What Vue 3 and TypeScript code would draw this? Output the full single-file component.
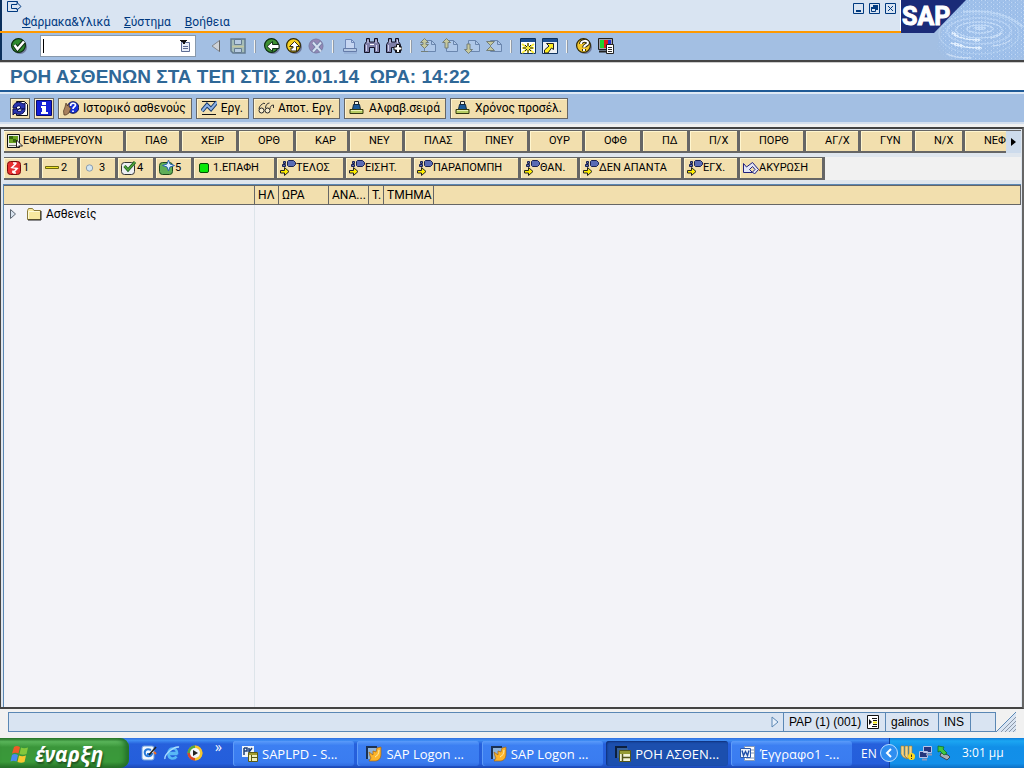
<script setup lang="ts">
interface Item { label: string; icon?: string; width: number }
interface Action { label: string; icon: string }
interface Task { label: string; icon: string; active?: boolean }

const menus = [
  { key: 'Φ', rest: 'άρμακα&Υλικά' },
  { key: 'Σ', rest: 'ύστημα' },
  { key: 'Β', rest: 'οήθεια' },
]
const windowButtons = [
  { label: 'Minimize', icon: 'win-min' },
  { label: 'Restore', icon: 'win-restore' },
  { label: 'Close', icon: 'win-close' },
]
const toolGroups: string[][] = [
  ['collapse', 'save'],
  ['back', 'exit', 'cancel'],
  ['print', 'find', 'find-next'],
  ['page-first', 'page-prev', 'page-next', 'page-last'],
  ['session', 'shortcut'],
  ['help', 'layout'],
]
const actions: Action[] = [
  { label: '', icon: 'refresh' },
  { label: '', icon: 'info' },
  { label: 'Ιστορικό ασθενούς', icon: 'history' },
  { label: 'Εργ.', icon: 'chart' },
  { label: 'Αποτ. Εργ.', icon: 'glasses' },
  { label: 'Αλφαβ.σειρά', icon: 'sort' },
  { label: 'Χρόνος προσέλ.', icon: 'sort' },
]
const clinics: Item[] = [
  { label: 'ΕΦΗΜΕΡΕΥΟΥΝ', icon: 'select', width: 122 },
  { label: 'ΠΑΘ', width: 56 },
  { label: 'ΧΕΙΡ', width: 57 },
  { label: 'ΟΡΘ', width: 57 },
  { label: 'ΚΑΡ', width: 54 },
  { label: 'ΝΕΥ', width: 55 },
  { label: 'ΠΛΑΣ', width: 61 },
  { label: 'ΠΝΕΥ', width: 64 },
  { label: 'ΟΥΡ', width: 55 },
  { label: 'ΟΦΘ', width: 58 },
  { label: 'ΠΔ', width: 47 },
  { label: 'Π/Χ', width: 50 },
  { label: 'ΠΟΡΘ', width: 66 },
  { label: 'ΑΓ/Χ', width: 55 },
  { label: 'ΓΥΝ', width: 54 },
  { label: 'Ν/Χ', width: 50 },
  { label: 'ΝΕΦ', width: 56 },
]
const statuses: Item[] = [
  { label: '1', icon: 'triage1', width: 38 },
  { label: '2', icon: 'triage2', width: 38 },
  { label: '3', icon: 'triage3', width: 38 },
  { label: '4', icon: 'triage4', width: 38 },
  { label: '5', icon: 'triage5', width: 38 },
  { label: '1.ΕΠΑΦΗ', icon: 'green', width: 83 },
  { label: 'ΤΕΛΟΣ', icon: 'move', width: 69 },
  { label: 'ΕΙΣΗΤ.', icon: 'move', width: 68 },
  { label: 'ΠΑΡΑΠΟΜΠΗ', icon: 'move', width: 107 },
  { label: 'ΘΑΝ.', icon: 'move', width: 59 },
  { label: 'ΔΕΝ ΑΠΑΝΤΑ', icon: 'move', width: 104 },
  { label: 'ΕΓΧ.', icon: 'move', width: 56 },
  { label: 'ΑΚΥΡΩΣΗ', icon: 'undo', width: 85 },
]
const columns: Item[] = [
  { label: '', width: 251 },
  { label: 'ΗΛ', width: 24 },
  { label: 'ΩΡΑ', width: 50 },
  { label: 'ΑΝΑ...', width: 40 },
  { label: 'Τ.', width: 15 },
  { label: 'ΤΜΗΜΑ', width: 50 },
]
const tasks: Task[] = [
  { label: 'SAPLPD - S...', icon: 'app-lpd' },
  { label: 'SAP Logon ...', icon: 'app-logon' },
  { label: 'SAP Logon ...', icon: 'app-logon' },
  { label: 'ΡΟΗ ΑΣΘΕΝ...', icon: 'app-flow', active: true },
  { label: 'Έγγραφο1 -...', icon: 'app-word' },
]
</script>

<template>
  <svg class="sprite" aria-hidden="true">
    <symbol id="menu-out" viewBox="0 0 16 14"><path d="M11.500 3V1.500H1.500V11.500H11.500V10M5.500 4.500H11V2.500L15 6.500L11 10V8.500H5.500z" fill="none" stroke="#00397f" /></symbol>
    <symbol id="win-min" viewBox="0 0 11 11"><path d="M.5.5h10v10H.5z" fill="none" stroke="#00397f" /><path d="M3 7h5v2H3z" fill="#00397f" /></symbol>
    <symbol id="win-restore" viewBox="0 0 11 11"><path d="M.5.5h10v10H.5z" fill="none" stroke="#00397f" /><path d="M4 2h5v5H4z" fill="#00397f" /><path d="M2.500 5.500h4v3h-4z" fill="#d9e4f2" stroke="#00397f" /><path d="M2 4h5v2H2z" fill="#00397f" /></symbol>
    <symbol id="win-close" viewBox="0 0 11 11"><path d="M.5.5h10v10H.5z" fill="none" stroke="#00397f" /><path d="M3 3l5 5M8 3l-5 5" stroke="#00397f" /></symbol>

    <symbol id="ok" viewBox="0 0 16 16"><circle cx="9" cy="9" r="7" fill="#6f7a9c" /><circle cx="7.500" cy="7.500" r="6.900" fill="#2f8a2f" stroke="#0b2b10" stroke-width="1.200" /><path d="M3.500 7l3 4L13 3.500" fill="none" stroke="#102a10" stroke-width="4.500" /><path d="M3.500 7l3 4L13 3.500" fill="none" stroke="#fff" stroke-width="2.500" /></symbol>
    <symbol id="list" viewBox="0 0 10 12"><path d="M1.500 2.500h8v9h-8z" fill="#e8eef8" stroke="#5c6c94" /><path d="M3 6.500h5M3 8.500h5" stroke="#5c6c94" /><path d="M0 0h7v1H6v1H5v2H3V2H1V1H0z" fill="#111" /></symbol>
    <symbol id="collapse" viewBox="0 0 16 16"><path d="M11.500 2.500v11L4 8z" fill="#cfd3d8" stroke="#84888f" /><path d="M11.500 2.500v11" stroke="#666" /></symbol>
    <symbol id="save" viewBox="0 0 16 16"><path d="M1 1h14v14H3l-2-2z" fill="#a5bdb8" stroke="#647c90" stroke-width="1.500" /><path d="M4.500 1.500h7v5h-7zM4.500 10.500h7v4h-7z" fill="#b7cbe2" stroke="#647c90" /><path d="M2 8.500h12" stroke="#c4c79e" stroke-width="1.500" /></symbol>
    <symbol id="back" viewBox="0 0 16 16"><circle cx="9" cy="9" r="7" fill="#6f7a9c" /><circle cx="7.500" cy="7.500" r="6.900" fill="#3f9133" stroke="#0b2b10" stroke-width="1.200" /><path d="M3 8.500l5.500-5v3H15v4H8.500v3z" fill="#fff" stroke="#13301a" /></symbol>
    <symbol id="exit" viewBox="0 0 16 16"><circle cx="9" cy="9" r="7" fill="#6f7a9c" /><circle cx="7.500" cy="7.500" r="6.900" fill="#f7d020" stroke="#2d2708" stroke-width="1.200" /><path d="M8.500 3.500l5 5h-3v4.500H5v-3h2V8.500H3.500z" fill="#fff" stroke="#352e10" /></symbol>
    <symbol id="cancel" viewBox="0 0 16 16"><circle cx="8" cy="8" r="7" fill="#9487b5" stroke="#7b7ca5" /><path d="M5 4.500l8 9M13 4.500l-8 9" stroke="#6b7fa4" stroke-width="3.400" /><path d="M5 4.500l8 9M13 4.500l-8 9" stroke="#d6e1f2" stroke-width="2" /></symbol>
    <symbol id="print" viewBox="0 0 16 16"><path d="M3.500 10V1.500h6l3 3V10" fill="#c6d6f2" stroke="#7088b8" /><path d="M9.500 1.500v3h3" fill="none" stroke="#7088b8" /><path d="M1.500 10.500h13v3h-13z" fill="#b4c8e4" stroke="#647ba8" /><path d="M2 15h13" stroke="#8ba3cc" /></symbol>
    <symbol id="find" viewBox="0 0 16 16"><path d="M.5 14.500v-8l2-3v-3h3v3.500h5V.5h3v3l2 3v8h-5v-5h-5v5z" fill="#7f7fa8" stroke="#111126" /><path d="M2.500 7v6M12.500 7v6M4 2v3M12 2v3" stroke="#d4d4f0" /><path d="M6 6.500h4" stroke="#fff" /></symbol>
    <symbol id="find-next" viewBox="0 0 16 16"><path d="M.5 14.500v-8l2-3v-3h3v3.500h4V.5h3v3l2 3v8h-5v-5h-4v5z" fill="#7f7fa8" stroke="#111126" /><path d="M2.500 7v6M4 2v3M11.500 2v3" stroke="#d4d4f0" /><path d="M10.500 6.500h3v2.500h2.500v3h-2.500v2.500h-3V12H8V9h2.500z" fill="#fff" stroke="#111" /></symbol>
    <symbol id="page" viewBox="0 0 16 16"><path d="M4.500 2.500h7l4 4v7h-11z" fill="#afc8e9" stroke="#6a86ae" /><path d="M11.500 2.500v4h4" fill="none" stroke="#6a86ae" /></symbol>
    <symbol id="page-first" viewBox="0 0 16 16"><use href="#page" /><path d="M4.500.5l4 4H6v2h2.500l-4 4-4-4H3v-2H.5zM1 13.500h7" fill="#c7c99c" stroke="#747f78" /></symbol>
    <symbol id="page-prev" viewBox="0 0 16 16"><use href="#page" /><path d="M4.500.5l4 4H6V10H3V4.500H.5z" fill="#c7c99c" stroke="#747f78" /></symbol>
    <symbol id="page-next" viewBox="0 0 16 16"><use href="#page" /><path d="M4.500 15.500l-4-4H3V6h3v5.500h2.500z" fill="#c7c99c" stroke="#747f78" /></symbol>
    <symbol id="page-last" viewBox="0 0 16 16"><use href="#page" /><path d="M4.500 7.500l-4-4h8zM4.500 8.500l4 4h-8z" fill="#c7c99c" stroke="#747f78" /></symbol>
    <symbol id="session" viewBox="0 0 16 16"><path d="M.5.5h15v15H.5z" fill="#fff" stroke="#10335f" /><path d="M1 1h14v3H1z" fill="#1d4f92" /><path d="M2 6l12 9M14 6L2 15M8 5v10M2 10h12" stroke="#f7e93c" stroke-width="2" /><path d="M8 5v3M8 12v3M3 10h3M10 10h3M5 7l2 2M11 7L9 9M5 13l2-2M11 13l-2-2" stroke="#222" /></symbol>
    <symbol id="shortcut" viewBox="0 0 16 16"><path d="M.5.5h15v15H.5z" fill="#eef1f4" stroke="#10335f" /><path d="M1 1h14v3H1z" fill="#1d4f92" /><path d="M4.500 5.500h7v6L9.500 10 6 15H2.500V12L7 8z" fill="#ffee22" stroke="#222" /></symbol>
    <symbol id="help" viewBox="0 0 16 16"><circle cx="9" cy="9" r="7" fill="#6f7a9c" /><circle cx="7.500" cy="7.500" r="6.900" fill="#f2c62a" stroke="#2d2708" stroke-width="1.200" /><path d="M5 6c0-4 7-4 7-1 0 2-4 2-4 4.500M8 11v2" fill="none" stroke="#2c250c" stroke-width="3.800" /><path d="M5 6c0-4 7-4 7-1 0 2-4 2-4 4.500M8 11v2" fill="none" stroke="#fff" stroke-width="2" /></symbol>
    <symbol id="layout" viewBox="0 0 16 16"><path d="M.5.5h14v11H.5z" fill="#a0a0ac" stroke="#222" /><path d="M2 2h4v8H2z" fill="#1fd22a" /><path d="M6 2h4v8H6z" fill="#e01818" /><path d="M10 2h3v8h-3z" fill="#2433c8" /><path d="M1 13.500h8" stroke="#222" stroke-width="2" /><path d="M8.500 6.500h7v9h-7z" fill="#fff" stroke="#222" /><path d="M10 9.500h4M10 11.500h4M10 13.500h4" stroke="#333" /></symbol>

    <symbol id="refresh" viewBox="0 0 16 16"><path d="M4.500 1.500h8l3 3v11h-11z" fill="#fff" stroke="#111" /><path d="M1 8C1 2 8 1 11 4l2-1v6H7l2-2C7 5 5 6 4 8z" fill="#2a35b0" stroke="#0a0d52" /><path d="M13 9c0 5-6 7-10 4l-2 2V9h6l-2 2c3 1 5 0 5-2z" fill="#2a35b0" stroke="#0a0d52" /></symbol>
    <symbol id="info" viewBox="0 0 16 16"><path d="M.5.5h15v15H.5z" fill="#1420d8" stroke="#060a70" /><path d="M6 2h4v3H6zM5 6h5v6h2v2H5v-2h1V8H5z" fill="#fff" /></symbol>
    <symbol id="history" viewBox="0 0 16 16"><circle cx="10" cy="7.500" r="5.800" fill="#1730d8" stroke="#07104c" /><path d="M7.500 6c0-3.500 5-3.500 5-1 0 2-2.500 1.500-2.500 4M10 10.500V12" fill="none" stroke="#fff" stroke-width="1.700" /><path d="M1 15l-.5-4L2 7l1-4 1.500 3L6 4v3l2 1-2 5-3 2z" fill="#a8805c" stroke="#4a3320" stroke-width=".7" /></symbol>
    <symbol id="chart" viewBox="0 0 16 16"><path d="M1 1.500h14M1 14.500h14" fill="none" stroke="#111" /><path d="M1 11l5-6 4 4 6-7" fill="none" stroke="#15396c" stroke-width="4" /><path d="M1 11l5-6 4 4 6-7" fill="none" stroke="#8fb2e6" stroke-width="2" /></symbol>
    <symbol id="glasses" viewBox="0 0 16 16"><path d="M1 9c0-3 3-5 5-6l1 1M7.500 8c0-3 2-5 4-5" fill="none" stroke="#333" /><circle cx="3.500" cy="10.500" r="2.500" fill="#f7edcf" stroke="#222" /><circle cx="9.500" cy="10.500" r="2.500" fill="#f7edcf" stroke="#222" /><path d="M12 9c0-2 1-4 3.500-4v3" fill="none" stroke="#333" /></symbol>
    <symbol id="sort" viewBox="0 0 16 16"><path d="M5.500 1.500h4v3h-4z" fill="#f2f2ea" stroke="#222" /><path d="M4.500 4.500h6l1 5h-8z" fill="#1d5b9a" stroke="#11283f" /><path d="M1 9.500h13v4H1z" fill="#b6cc62" stroke="#31380f" /><path d="M2 10.500h11" stroke="#eaf2b4" /></symbol>

    <symbol id="select" viewBox="0 0 16 16"><path d="M.5 1.500h12v13H.5z" fill="#e9ede4" stroke="#111" /><path d="M2 3h9v7H2z" fill="#6aa020" /><path d="M2 3h4v3H2zM6 6h3v3H6z" fill="#34660a" /><path d="M2 12.500h7" stroke="#777" /><path d="M9.500 7v8l2-2h4z" fill="#fff" stroke="#222" /></symbol>
    <symbol id="triage1" viewBox="0 0 16 16"><rect x=".5" y="1.500" width="13" height="13" rx="3" fill="#e83030" stroke="#7a0a0a" /><path d="M9.500 3L5 7.500l5 1L6 13M9.500 3H6M6 13v-2.500M6 13h3" fill="none" stroke="#fff" stroke-width="1.700" /></symbol>
    <symbol id="triage2" viewBox="0 0 16 16"><path d="M.5 6.500h13v2H.5z" fill="#f0e22a" stroke="#6b6710" /></symbol>
    <symbol id="triage3" viewBox="0 0 16 16"><circle cx="6.500" cy="8" r="3.200" fill="#d3e6f2" stroke="#8b9dae" /></symbol>
    <symbol id="triage4" viewBox="0 0 16 16"><rect x=".5" y="2.500" width="13" height="12" rx="3" fill="#eceef2" stroke="#333" /><path d="M3.500 6l3.500 4 7-8" fill="none" stroke="#1d5d1d" stroke-width="3" /><path d="M3.500 6l3.500 4 7-8" fill="none" stroke="#51a53c" stroke-width="1.400" /></symbol>
    <symbol id="triage5" viewBox="0 0 16 16"><rect x=".5" y="2.500" width="13" height="12" rx="3" fill="#5fae58" stroke="#1c4a1c" /><path d="M9.500 0l1.500 4 4.500 1.500L11 7l-1.500 4L8 7 3.500 5.500 8 4z" fill="#d9ecff" stroke="#2b64ac" /></symbol>
    <symbol id="green" viewBox="0 0 16 16"><rect x="2.500" y="3.500" width="9" height="9" rx="1.500" fill="#08e808" stroke="#044a04" /></symbol>
    <symbol id="move" viewBox="0 0 16 16"><path d="M8.500.5h5l2 2v2l-2 2h-5l-1-1v-4z" fill="#5a6cb4" stroke="#1a2250" /><path d="M3.500 1.500h2v2h-2zM2.500 4.500h3v2h-3z" fill="#5a6cb4" stroke="#1a2250" /><path d="M.5 10.500h4v-3l4.500 4-4.500 4v-2.500h-4z" fill="#ffee00" stroke="#222" /></symbol>
    <symbol id="undo" viewBox="0 0 16 16"><path d="M.5 3.500v9h9L6.500 9.500l3-3L12 9.500 9.500 12l2 2 4-4.500-6-7L3.500 7z" fill="#e3e6f6" stroke="#20207c" /></symbol>

    <symbol id="expander" viewBox="0 0 8 12"><path d="M1.500 1.500L6.500 6l-5 4.500z" fill="#d8e2ee" stroke="#5a6470" /></symbol>
    <symbol id="folder" viewBox="0 0 15 13"><path d="M.5 11.500v-9l1-2h4l1.500 2h6.500v9z" fill="#f8e9a0" stroke="#8a7a3a" /><path d="M1.500 10.500V3.500h11" fill="none" stroke="#fffbd8" /><path d="M1 12h13V3" fill="none" stroke="#222" /></symbol>
    <symbol id="sysmenu" viewBox="0 0 12 14"><path d="M.5.5h11v13H.5z" fill="#fff" stroke="#111" /><path d="M2 4l3 3-3 3z" fill="#111" /><path d="M5 3.500h5M6 5.500h4M6 9.500h4M5 11.500h5" stroke="#111" /><path d="M6 7.500h4" stroke="#f1e411" stroke-width="2" /></symbol>

    <symbol id="flag" viewBox="0 0 20 20"><path d="M4 3c2-1.500 4-1 6 0L8.500 9.500c-2-1-4-1-6.500 0z" fill="#ee5a28" /><path d="M11 3.500c2 1 4 1 7 0l-1.500 6.500c-2 1-4.500 1-7 0z" fill="#83c83c" /><path d="M2 11c2-1.500 4-1 6 0l-1.500 6.500c-2-1-4-1-6 0z" fill="#4a8af0" /><path d="M9 11.500c2 1 4.500 1 7 0l-1.500 6.500c-2 1-4.500 1-7 0z" fill="#f8c830" /></symbol>
    <symbol id="desktop" viewBox="0 0 16 16"><rect x="1" y="1" width="12" height="14" rx="2" fill="#f2f8ff" stroke="#6f9fdb" /><path d="M10 5c-5-2-7 1-6 4s6 3 7 0H6" fill="none" stroke="#2779d8" stroke-width="2" /><path d="M8 10l7-8" stroke="#222" stroke-width="1.600" /><path d="M13 7l2 2" stroke="#f06a20" stroke-width="2" /></symbol>
    <symbol id="ie" viewBox="0 0 16 16"><path d="M13.500 9H4.500c0 5.500 6 5.500 8 2.500M4.500 8c0-6 8.500-6 8.500 0z" fill="none" stroke="#58b7f6" stroke-width="2.600" /><path d="M1 14C0 10 8 2 15 2c-2-.5-3 0-5 1" fill="none" stroke="#a9dcff" stroke-width="1.400" /></symbol>
    <symbol id="player" viewBox="0 0 16 16"><circle cx="8" cy="8" r="7.500" fill="#f08a24" /><path d="M8 .5A7.500 7.500 0 0 1 15.500 8H8z" fill="#f4c830" /><path d="M15.500 8A7.500 7.500 0 0 1 8 15.500V8z" fill="#f4c830" /><path d="M.5 8A7.500 7.500 0 0 1 8 .5V8z" fill="#56a93e" /><path d="M.5 8A7.500 7.500 0 0 0 8 15.500V8z" fill="#d8492a" /><circle cx="8" cy="8" r="5" fill="#f2f6fc" /><path d="M6 5l5 3-5 3z" fill="#222" /></symbol>
    <symbol id="app-lpd" viewBox="0 0 16 16"><path d="M0 0h12v11H0z" fill="#eef3fa" /><path d="M2 2v7M2 2h3v3H2M7 2v4l3 3M10 2L7 6" fill="none" stroke="#1c3f78" stroke-width="1.500" /><path d="M6.500 6.500h9v9h-9z" fill="#f1efb8" stroke="#5b5a14" /><path d="M7 7h8v2H7z" fill="#a09a2c" /><path d="M9.500 9v6M9 11.500h6" stroke="#5b5a14" /></symbol>
    <symbol id="app-logon" viewBox="0 0 16 16"><path d="M0 0h11v13H0z" fill="#1b3153" /><path d="M2 2h9v11H2z" fill="#8fb3da" /><path d="M3 6l4 3V5l3 1 1-4 4-1v7c0 5-3 7-6 7H3l2-3-1-2z" fill="#fdb52c" stroke="#a8640c" stroke-width=".7" /><path d="M9 11c2-1 4-3 4-7" fill="none" stroke="#fff0b0" /></symbol>
    <symbol id="app-flow" viewBox="0 0 16 16"><path d="M1 12V1h11" fill="none" stroke="#0c1f3f" stroke-width="2" /><path d="M2 2h11v10H2z" fill="#36609a" /><path d="M4.500 4.500h11v11h-11z" fill="#f2f2d6" stroke="#54561a" /><path d="M5 5h10v3H5z" fill="#959a35" /><path d="M7.500 8v7M7 11.500h8" stroke="#54561a" stroke-width="1.500" /></symbol>
    <symbol id="app-word" viewBox="0 0 16 16"><path d="M4.500.5h10v14h-10z" fill="#fff" stroke="#8799b5" /><path d="M11 4h3M11 7h3M6 12h8" stroke="#7b90b3" /><path d="M.5 2.500h10v9H.5z" fill="#eaf1fc" stroke="#2c5bad" /><path d="M2 4.500l1.500 5 2-4 2 4L9 4.500" fill="none" stroke="#1f4fa8" stroke-width="1.400" /></symbol>
    <symbol id="chevron" viewBox="0 0 18 18"><circle cx="9" cy="9" r="8.500" fill="#2f8ef0" stroke="#b9dcff" /><path d="M11 5L7 9l4 4" fill="none" stroke="#fff" stroke-width="2" /></symbol>
    <symbol id="shield" viewBox="0 0 16 16"><path d="M1 1h3v9l3 4-4-2-2-3zM5 1h3v13l-3-3zM9 1h3v9l-3 4z" fill="#f3d487" stroke="#a27b2e" stroke-width=".6" /><circle cx="11.500" cy="11.500" r="3.500" fill="#ffd91f" /><path d="M11.500 9.500v2.500M11.500 13v1" stroke="#333" /></symbol>
    <symbol id="network" viewBox="0 0 16 16"><path d="M5.500 1.500h8v6h-8zM1.500 6.500h8v6h-8z" fill="#26357c" stroke="#b7c3e8" /><path d="M8 9.500h6M4 14.500h5" stroke="#8e98bb" stroke-width="2" /></symbol>
    <symbol id="eject" viewBox="0 0 16 16"><path d="M5 8l7 2 2 2-3 3-7-4z" fill="#a9afb8" stroke="#40464f" /><path d="M2 1l6 1-1 2 4 4-3 2-4-4-2 1z" fill="#41c541" stroke="#0d6b18" stroke-width=".7" /></symbol>
  </svg>

  <div class="screen">
    <header class="top">
      <div class="top-left">
        <div class="menu-area">
          <button class="plain out" aria-label="Menu"><svg width="16" height="14"><use href="#menu-out" /></svg></button>
          <nav class="menus">
            <button v-for="m in menus" :key="m.key" class="plain"><u>{{ m.key }}</u>{{ m.rest }}</button>
          </nav>
          <div class="win-buttons">
            <button v-for="w in windowButtons" :key="w.icon" class="plain" :aria-label="w.label"><svg width="11" height="11"><use :href="'#' + w.icon" /></svg></button>
          </div>
        </div>
        <div class="stripe"></div>
        <div class="toolbar">
          <button class="plain" aria-label="Enter"><svg width="16" height="16"><use href="#ok" /></svg></button>
          <div class="command">
            <input type="text" aria-label="Command" />
            <span class="caret"></span>
            <button class="plain" aria-label="Command list"><svg width="10" height="12"><use href="#list" /></svg></button>
          </div>
          <div v-for="(group, g) in toolGroups" :key="g" class="tool-group">
            <button v-for="t in group" :key="t" class="plain" :aria-label="t"><svg width="16" height="16"><use :href="'#' + t" /></svg></button>
          </div>
        </div>
      </div>
      <svg class="brand" width="123" height="60" viewBox="0 0 123 60" role="img" aria-label="SAP">
        <defs>
          <pattern id="dots" width="4" height="4" patternUnits="userSpaceOnUse"><path d="M0 0h1v1H0zM2 2h1v1H2z" fill="#d5e6fb" /></pattern>
          <pattern id="dots-dark" width="3" height="2" patternUnits="userSpaceOnUse"><path d="M1 0h1v1H1z" fill="#8fb6e6" /></pattern>
          <radialGradient id="glow"><stop offset="0" stop-color="#fff" /><stop offset=".75" stop-color="#fff" /><stop offset="1" stop-color="#000" /></radialGradient>
          <mask id="fade"><ellipse cx="86" cy="28" rx="58" ry="46" fill="url(#glow)" /></mask>
        </defs>
        <path d="M0 0h123v60H0z" fill="#a3bfe3" />
        <path d="M50 0h73v60H32z" fill="#9fc0ea" mask="url(#fade)" />
        <path d="M50 0h73v60H32z" fill="url(#dots)" mask="url(#fade)" opacity=".6" />
        <g fill="none" stroke="#c3dbf8">
          <ellipse cx="79" cy="28" rx="5" ry="1" stroke-width="2" />
          <ellipse cx="79" cy="29" rx="13" ry="4" stroke-width="1.500" />
          <ellipse cx="78" cy="30" rx="23" ry="8" stroke-width="1.500" />
          <ellipse cx="78" cy="31" rx="32" ry="13" stroke-width="2" opacity=".6" />
          <ellipse cx="78" cy="34" rx="40" ry="20" stroke-width="1.500" opacity=".4" />
          <path d="M62 12c26-3 45 2 60 15" stroke-width="2.500" opacity=".8" />
        </g>
        <g fill="none" stroke="#e2effe" stroke-linecap="round">
          <path d="M52 33c4 4 14 7 27 7M50 43c7 3 17 5 30 5" stroke-width="1.500" />
          <path d="M52 33l4 3M54 44l7 2M74 40h3M76 48h3" stroke-width="3" />
          <path d="M46 54c6 3 14 4 24 4M90 38c5-1 9-3 11-5M92 46c8-1 14-3 18-6" stroke-width="1.500" opacity=".6" />
        </g>
        <path d="M60 0h63v60H34z" fill="url(#dots-dark)" mask="url(#fade)" opacity=".6" />
        <path d="M0 0h65L33 33H0z" fill="#1a2b78" />
        <text x="1" y="25" class="logo">SAP</text>
      </svg>
    </header>

    <h1 class="title">ΡΟΗ ΑΣΘΕΝΩΝ ΣΤΑ ΤΕΠ ΣΤΙΣ 20.01.14&nbsp; ΩΡΑ: 14:22</h1>

    <div class="actions">
      <button v-for="(a, i) in actions" :key="i" class="action" :class="{ square: !a.label }" :aria-label="a.label || a.icon">
        <svg width="16" height="16"><use :href="'#' + a.icon" /></svg><span v-if="a.label">{{ a.label }}</span>
      </button>
    </div>

    <main class="frame">
      <div class="strip">
        <div class="strip-items">
          <button v-for="c in clinics" :key="c.label" class="cell" :style="{ width: c.width + 'px' }">
            <span class="slot"><svg v-if="c.icon" width="16" height="16"><use :href="'#' + c.icon" /></svg></span>{{ c.label }}
          </button>
        </div>
        <button class="more" aria-label="More"><svg width="5" height="8" viewBox="0 0 5 8"><path d="M0 0l5 4-5 4z" fill="#000" /></svg></button>
      </div>
      <div class="strip second">
        <div class="strip-items">
          <button v-for="s in statuses" :key="s.label" class="cell" :style="{ width: s.width + 'px' }">
            <span class="slot"><svg width="16" height="16"><use :href="'#' + s.icon" /></svg></span>{{ s.label }}
          </button>
        </div>
      </div>
      <div class="tree">
        <table>
          <colgroup>
            <col v-for="(c, i) in columns" :key="i" :style="{ width: c.width + 'px' }" />
            <col />
          </colgroup>
          <thead>
            <tr><th v-for="(c, i) in columns" :key="i">{{ c.label }}</th><th></th></tr>
          </thead>
          <tbody>
            <tr>
              <td>
                <div class="node">
                  <button class="plain" aria-label="Expand"><svg width="8" height="12"><use href="#expander" /></svg></button>
                  <svg width="15" height="13"><use href="#folder" /></svg>
                  <span>Ασθενείς</span>
                </div>
              </td>
              <td v-for="n in 6" :key="n"></td>
            </tr>
          </tbody>
        </table>
        <div class="tree-rest"></div>
      </div>
    </main>

    <footer class="status">
      <div class="message"><svg width="8" height="12" viewBox="0 0 8 12"><path d="M1 1l6 5-6 5z" fill="#e6effa" stroke="#5a87b4" /></svg></div>
      <div class="info system"><span>PAP (1) (001)</span><svg width="12" height="14"><use href="#sysmenu" /></svg></div>
      <div class="info user">galinos</div>
      <div class="info mode">INS</div>
      <div class="info blank"></div>
      <svg class="grip" width="20" height="20" viewBox="0 0 20 20"><path d="M0 20L20 0v20z" fill="#d9e4f2" /><path d="M0 20L20 0" stroke="#5a87b4" /><path d="M5 20L20 5M9 20L20 9M13 20l7-7M17 20l3-3" stroke="#8c98a8" /></svg>
    </footer>

    <div class="taskbar">
      <button class="start"><svg width="20" height="20"><use href="#flag" /></svg><span>έναρξη</span></button>
      <div class="quick">
        <button class="plain" aria-label="Desktop"><svg width="16" height="16"><use href="#desktop" /></svg></button>
        <button class="plain" aria-label="Browser"><svg width="16" height="16"><use href="#ie" /></svg></button>
        <button class="plain" aria-label="Player"><svg width="16" height="16"><use href="#player" /></svg></button>
        <span class="more-quick">»</span>
      </div>
      <div class="tasks">
        <button v-for="(t, i) in tasks" :key="i" class="task" :class="{ active: t.active }"><svg width="16" height="16"><use :href="'#' + t.icon" /></svg><span>{{ t.label }}</span></button>
      </div>
      <div class="lang">EN</div>
      <div class="tray">
        <button class="plain chev" aria-label="Show icons"><svg width="18" height="18"><use href="#chevron" /></svg></button>
        <svg width="16" height="16"><use href="#shield" /></svg>
        <svg width="16" height="16"><use href="#network" /></svg>
        <svg width="16" height="16"><use href="#eject" /></svg>
        <time>3:01 μμ</time>
      </div>
    </div>
  </div>
</template>

<style>
body { margin: 0; overflow: hidden; }
</style>

<style scoped>
.sprite { position: absolute; width: 0; height: 0; }
.screen { display: flex; flex-direction: column; height: 100vh; background: #f1f1f1; color: #000; font: 12px/16px Roboto, "Liberation Sans", sans-serif; }
.screen svg { display: block; flex: none; }
.screen button { font: inherit; color: inherit; cursor: default; }
.plain { display: block; padding: 0; border: 0; background: none; white-space: nowrap; }

.top { display: flex; background: #a3bfe3; }
.top-left { flex: 1; min-width: 0; }
.menu-area { display: grid; grid-template-columns: 1fr auto; grid-template-rows: 14px 17px; padding-left: 4px; border-left: 2px solid #0a2f5c; border-right: 1px solid #fff; background: #d9e4f2; color: #00397f; }
.out { justify-self: start; }
.menus { grid-column: 1; grid-row: 2; display: flex; align-items: flex-start; gap: 14px; padding-left: 16px; line-height: 16px; }
.win-buttons { grid-column: 2; grid-row: 1; display: flex; gap: 5px; padding: 2px 4px 0 0; }
.stripe { height: 2px; background: #f90; }
.toolbar { display: flex; align-items: center; box-sizing: border-box; height: 27px; padding: 0 0 1px 9px; border-left: 2px solid #0a2f5c; background: #a3bfe3; }
.command { display: flex; align-items: center; box-sizing: border-box; width: 156px; height: 22px; margin: 0 12px 0 13px; padding: 0 5px 0 2px; border: 1px solid #8899ac; background: #fff; }
.command input { order: 2; flex: 1; min-width: 0; padding: 0; border: 0; outline: 0; background: none; font: inherit; }
.command button { order: 3; }
.caret { order: 1; width: 1px; height: 14px; background: #000; }
.tool-group { display: flex; align-items: center; gap: 6px; }
.tool-group + .tool-group::before { content: ""; width: 1px; height: 13px; margin: 0 3px 0 8px; background: #f2f2ee; box-shadow: 1px 0 #8f9bab; }
.brand { flex: none; }
.logo { fill: #fff; stroke: #fff; stroke-width: 1px; font: bold 25px Roboto, "Liberation Sans", sans-serif; }

.title { margin: 0; padding: 0 10px; height: 28px; border-top: 2px solid #444; border-bottom: 2px solid #1f5a96; box-shadow: inset 0 1px #ccc; background: #fff; color: #2f6897; font: bold 19px/29px "Liberation Sans", Arial, sans-serif; white-space: nowrap; }
.actions { display: flex; align-items: center; gap: 4px; height: 28px; padding-left: 10px; border-top: 2px solid #dfe9f5; border-bottom: 2px solid #d5e0ee; background: #a3bfe3; }
.action { display: flex; align-items: center; gap: 4px; box-sizing: border-box; height: 21px; padding: 0 5px 0 4px; border: 1px solid #666; box-shadow: inset 1px 1px #fff4d0; background: #f2dfae; white-space: nowrap; }
.action.square { width: 20px; padding: 0 1px; }

.frame { flex: 1; min-height: 0; display: flex; flex-direction: column; margin-top: 3px; padding: 1px 1px 0 2px; border: 2px solid #444; border-left-width: 1px; border-right-color: #666; background: #dfe6ee; }
.strip { display: flex; height: 22px; margin-left: 1px; border-top: 1px solid #666; font-size: 11px; }
.strip-items { display: flex; flex: 1; min-width: 0; overflow: hidden; }
.strip.second { margin-top: 4px; margin-bottom: 4px; border-top: 0; padding-top: 1px; background: #f1f1f1; }
.second .cell { box-shadow: 0 -1px #666, inset 1px 1px #fff6cf; }
.second .strip-items { margin-top: -1px; padding-top: 1px; }
.cell { flex: none; display: flex; align-items: center; box-sizing: border-box; padding: 0 0 0 2px; border: solid #666; border-width: 0 3px 2px 0; box-shadow: inset 1px 1px #fff6cf; background: #f2dfae; white-space: nowrap; }
.slot { width: 17px; height: 16px; padding-left: 1px; box-sizing: border-box; }
.more { display: flex; align-items: center; width: 15px; padding: 0 5px; border: 0; background: #cddbec; }
.tree { flex: 1; min-height: 0; display: flex; flex-direction: column; border-top: 1px solid #5a87b4; border-left: 1px solid #5a87b4; background: #f3f3f8; }
table { width: 100%; table-layout: fixed; border-collapse: separate; border-spacing: 0; }
th { box-sizing: border-box; height: 20px; padding: 0 0 0 3px; border: solid #666; border-width: 1px 1px 1px 0; background: #f2dfae; font-weight: normal; text-align: left; white-space: nowrap; overflow: hidden; }
td { height: 18px; padding: 0; }
td:first-child { border-right: 1px solid #dde4ea; }
.node { display: flex; align-items: center; padding-left: 5px; }
.node .plain { margin-right: 10px; }
.node span { margin-left: 4px; }
.tree-rest { flex: 1; width: 250px; border-right: 1px solid #dde4ea; }

.status { display: flex; height: 20px; margin: 3px 8px 6px; font: 12px/20px "Liberation Sans", Arial, sans-serif; }
.status > div { box-sizing: border-box; border: 1px solid #5a87b4; border-right-width: 0; background: #d9e4f2; }
.status .message { flex: 1; display: flex; align-items: center; justify-content: flex-end; padding-right: 4px; }
.status .info { line-height: 18px; padding-left: 5px; }
.system { display: flex; align-items: center; gap: 6px; width: 102px; }
.user { width: 53px; }
.mode { width: 32px; }
.status .blank { width: 26px; border-right-width: 1px; }

.taskbar { display: flex; height: 30px; background: linear-gradient(#2f6fe0, #3f8cf3 8%, #2660dc 20%, #245edb 85%, #1c48b4); color: #fff; font: 13px/16px "Open Sans", "Noto Sans", sans-serif; }
.start { display: flex; align-items: center; gap: 5px; width: 129px; padding: 2px 0 0 10px; border: 0; border-radius: 0 9px 9px 0; background: linear-gradient(#2c7a2c, #5cb85c 12%, #3a963a 30%, #3a9a3a 80%, #276f27); box-shadow: inset -4px 0 5px #22702a; }
.start span { color: #fff; font: italic bold 21px/24px "Noto Sans", "Open Sans", sans-serif; text-shadow: 1px 2px 2px #1d4f1d; }
.quick { display: flex; align-items: center; gap: 7px; width: 91px; padding-left: 12px; }
.more-quick { align-self: flex-start; margin-left: 5px; font-size: 14px; line-height: 18px; }
.tasks { flex: 1; min-width: 0; display: flex; gap: 3px; padding: 3px 0 2px 1px; }
.task { flex: 1; min-width: 0; display: flex; align-items: center; gap: 4px; padding: 0 0 0 9px; border: 0; border-radius: 3px; background: linear-gradient(#5a9bfa, #3c7ff2 18%, #3a7cf0 85%, #2f6ade); box-shadow: inset 1px 0 #5f9cf8; white-space: nowrap; overflow: hidden; }
.task.active { background: #1c4fae; box-shadow: inset 1px 1px 2px #0e2f78; }
.lang { align-self: center; margin-left: 9px; width: 28px; padding-top: 2px; font-size: 12px; }
.tray { display: flex; align-items: center; gap: 2px; width: 135px; box-sizing: border-box; border-left: 1px solid #0f3f9c; background: linear-gradient(#0f7fdc, #1ba6f2 10%, #118fe8 30%, #128fe9 85%, #0d6fc4); }
.chev { margin-left: -10px; }
.tray time { margin-left: 8px; font-size: 12px; white-space: nowrap; }
</style>
